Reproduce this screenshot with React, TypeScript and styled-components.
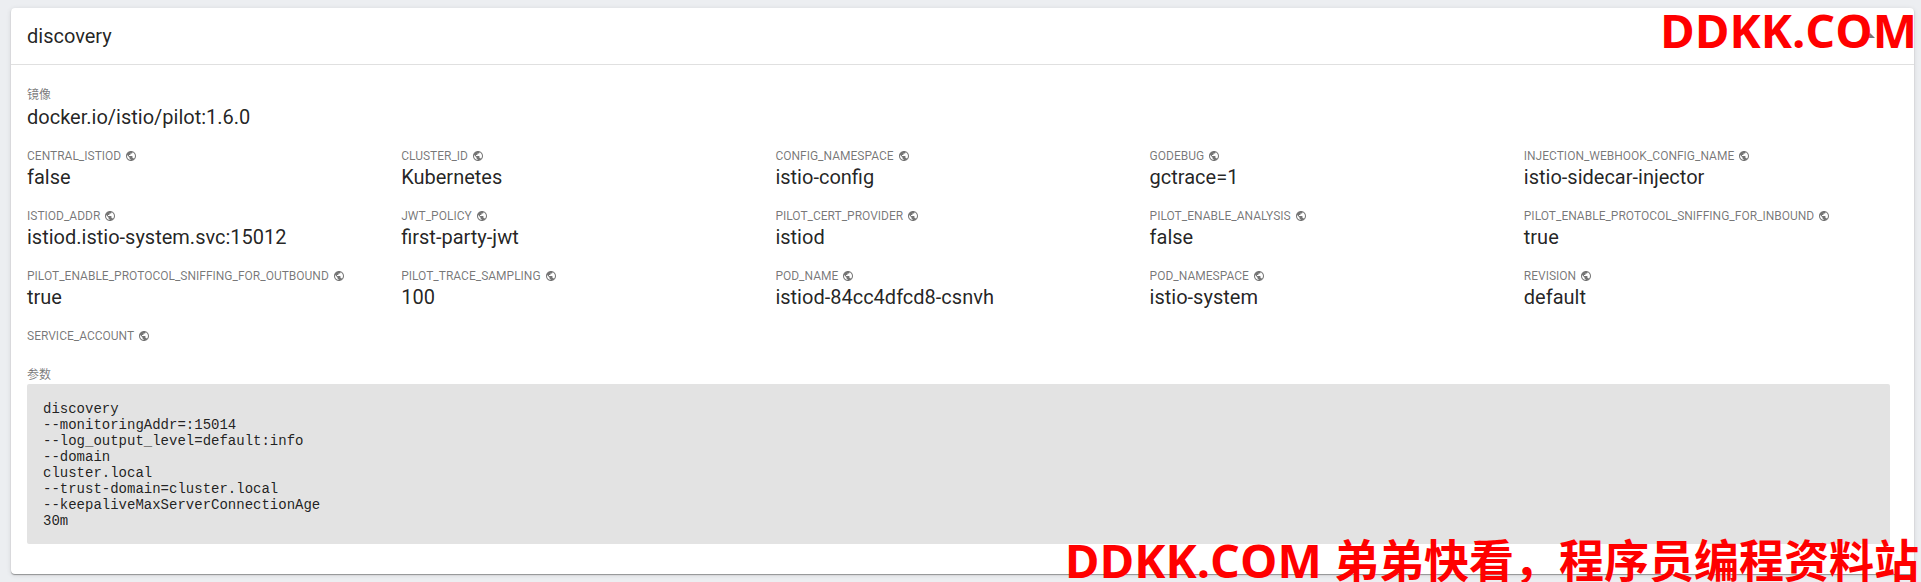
import React from "react";
import styled, { createGlobalStyle } from "styled-components";

const GlobalStyle = createGlobalStyle`
  * {
    box-sizing: border-box;
  }

  body {
    margin: 0;
    background: #eceef1;
    color: rgba(0, 0, 0, 0.87);
    font-family: Roboto, "Noto Sans CJK SC", sans-serif;
  }
`;

const Page = styled.main`
  position: relative;
  min-height: 100vh;
  padding: 8px 7px 8px 11px;
  overflow: hidden;
`;

const Card = styled.section`
  background: #fff;
  border-radius: 4px;
  box-shadow: 0 1px 1px rgba(0, 0, 0, 0.34), 0 1px 5px rgba(0, 0, 0, 0.12);
`;

const CardHeader = styled.header`
  display: flex;
  align-items: center;
  justify-content: space-between;
  height: 57px;
  padding: 0 32px 0 16px;
  border-bottom: 1px solid #e0e0e0;
`;

const CardTitle = styled.h2`
  margin: 0;
  font-size: 20px;
  font-weight: 400;
  line-height: 24px;
`;

const ToggleButton = styled.button`
  display: flex;
  padding: 0;
  border: 0;
  background: none;
  color: #757575;
  cursor: pointer;
`;

const CardBody = styled.div`
  padding: 21px 16px 30px;
`;

const Properties = styled.dl<{ $columns?: number }>`
  display: grid;
  grid-template-columns: repeat(${(p) => p.$columns ?? 1}, 1fr);
  margin: 0;
`;

const LastProperties = styled(Properties)`
  margin-bottom: 21px;
`;

const Property = styled.div<{ $roomy?: boolean }>`
  display: flex;
  flex-direction: column;
  gap: ${(p) => (p.$roomy ? 1 : 0)}px;
  min-height: ${(p) => (p.$roomy ? 61 : 60)}px;
`;

const Label = styled.dt`
  display: flex;
  align-items: center;
  gap: 4px;
  color: rgba(0, 0, 0, 0.54);
  font-size: 12px;
  line-height: 18px;
`;

const Value = styled.dd`
  margin: 0;
  font-size: 20px;
  line-height: 24px;
  overflow-wrap: anywhere;
`;

const ArgumentsTitle = styled.h3`
  margin: 0;
  color: rgba(0, 0, 0, 0.54);
  font-size: 12px;
  font-weight: 400;
  line-height: 18px;
`;

const ArgumentsCode = styled.pre`
  margin: 0 8px 0 0;
  padding: 17px 16px 15px;
  border-radius: 2px;
  background: #e3e3e3;
  font-family: "Liberation Mono", monospace;
  font-size: 14px;
  line-height: 16px;
`;

const Watermark = styled.div<{ $place: "top" | "bottom" }>`
  position: absolute;
  right: ${(p) => (p.$place === "top" ? 4 : 2)}px;
  ${(p) => (p.$place === "top" ? "top: 0;" : "bottom: 0;")}
  color: #f00;
  font-family: "Open Sans", "Noto Sans CJK SC", sans-serif;
  font-size: 47px;
  font-weight: 700;
  line-height: ${(p) => (p.$place === "top" ? 60 : 44)}px;
  white-space: nowrap;
  pointer-events: none;
`;

const Chinese = styled.span`
  font-family: "Noto Sans CJK SC", sans-serif;
  font-size: 45px;
  line-height: 1;
`;

const GlobeIcon = () => (
  <svg width="12" height="12" viewBox="0 0 24 24" fill="currentColor" aria-hidden="true">
    <path d="M12 2C6.48 2 2 6.48 2 12s4.48 10 10 10 10-4.48 10-10S17.52 2 12 2zm-1 17.93c-3.95-.49-7-3.85-7-7.93 0-.62.08-1.21.21-1.79L9 15v1c0 1.1.9 2 2 2v1.93zm6.9-2.54c-.26-.81-1-1.39-1.9-1.39h-1v-3c0-.55-.45-1-1-1H8v-2h2c.55 0 1-.45 1-1V7h2c1.1 0 2-.9 2-2v-.41c2.93 1.19 5 4.06 5 7.41 0 2.08-.8 3.97-2.1 5.39z" />
  </svg>
);

const ArrowUpIcon = () => (
  <svg width="24" height="24" viewBox="0 0 24 24" fill="currentColor" aria-hidden="true">
    <path d="M7 14l5-5 5 5z" />
  </svg>
);

const environment: [string, string][] = [
  ["CENTRAL_ISTIOD", "false"],
  ["CLUSTER_ID", "Kubernetes"],
  ["CONFIG_NAMESPACE", "istio-config"],
  ["GODEBUG", "gctrace=1"],
  ["INJECTION_WEBHOOK_CONFIG_NAME", "istio-sidecar-injector"],
  ["ISTIOD_ADDR", "istiod.istio-system.svc:15012"],
  ["JWT_POLICY", "first-party-jwt"],
  ["PILOT_CERT_PROVIDER", "istiod"],
  ["PILOT_ENABLE_ANALYSIS", "false"],
  ["PILOT_ENABLE_PROTOCOL_SNIFFING_FOR_INBOUND", "true"],
  ["PILOT_ENABLE_PROTOCOL_SNIFFING_FOR_OUTBOUND", "true"],
  ["PILOT_TRACE_SAMPLING", "100"],
  ["POD_NAME", "istiod-84cc4dfcd8-csnvh"],
  ["POD_NAMESPACE", "istio-system"],
  ["REVISION", "default"],
];

const containerArguments = [
  "discovery",
  "--monitoringAddr=:15014",
  "--log_output_level=default:info",
  "--domain",
  "cluster.local",
  "--trust-domain=cluster.local",
  "--keepaliveMaxServerConnectionAge",
  "30m",
];

export default function App() {
  return (
    <>
      <GlobalStyle />
      <Page>
        <Card>
          <CardHeader>
            <CardTitle>discovery</CardTitle>
            <ToggleButton type="button" aria-label="Collapse" aria-expanded="true">
              <ArrowUpIcon />
            </ToggleButton>
          </CardHeader>
          <CardBody>
            <Properties>
              <Property $roomy>
                <Label>镜像</Label>
                <Value>docker.io/istio/pilot:1.6.0</Value>
              </Property>
            </Properties>
            <Properties $columns={5}>
              {environment.map(([name, value]) => (
                <Property key={name}>
                  <Label>
                    {name}
                    <GlobeIcon />
                  </Label>
                  <Value>{value}</Value>
                </Property>
              ))}
            </Properties>
            <LastProperties $columns={5}>
              <div>
                <Label>
                  SERVICE_ACCOUNT
                  <GlobeIcon />
                </Label>
                <Value />
              </div>
            </LastProperties>
            <ArgumentsTitle>参数</ArgumentsTitle>
            <ArgumentsCode>{containerArguments.join("\n")}</ArgumentsCode>
          </CardBody>
        </Card>
        <Watermark $place="top">DDKK.COM</Watermark>
        <Watermark $place="bottom">
          DDKK.COM <Chinese>弟弟快看，程序员编程资料站</Chinese>
        </Watermark>
      </Page>
    </>
  );
}
